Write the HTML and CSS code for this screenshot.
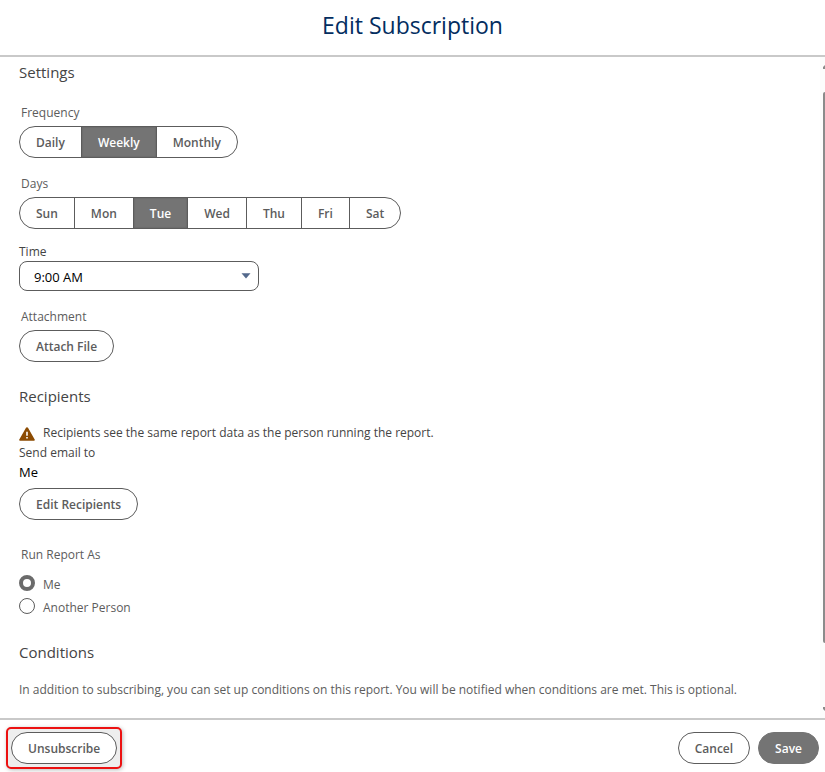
FILE: index.html
```html
<!DOCTYPE html>
<html lang="en">
<head>
<meta charset="utf-8">
<title>Edit Subscription</title>
<link rel="stylesheet" href="styles.css">
</head>
<body>
<div class="modal">
  <header class="modal-header"><h1>Edit Subscription</h1></header>
  <div class="modal-body">
    <main class="content">
      <section class="section">
        <h2>Settings</h2>
        <fieldset class="field frequency">
          <legend>Frequency</legend>
          <div class="segments">
            <label><input type="radio" name="frequency"><span>Daily</span></label>
            <label><input type="radio" name="frequency" checked><span>Weekly</span></label>
            <label><input type="radio" name="frequency"><span>Monthly</span></label>
          </div>
        </fieldset>
        <fieldset class="field days">
          <legend>Days</legend>
          <div class="segments">
            <label><input type="checkbox"><span>Sun</span></label>
            <label><input type="checkbox"><span>Mon</span></label>
            <label><input type="checkbox" checked><span>Tue</span></label>
            <label><input type="checkbox"><span>Wed</span></label>
            <label><input type="checkbox"><span>Thu</span></label>
            <label><input type="checkbox"><span>Fri</span></label>
            <label><input type="checkbox"><span>Sat</span></label>
          </div>
        </fieldset>
        <div class="field time">
          <label class="small-label" for="time">Time</label>
          <div class="select">
            <select id="time"><option>9:00 AM</option></select>
            <svg class="arrow" viewBox="0 0 10 6" aria-hidden="true"><path d="M0.5 0.3h9L5 5.5z"/></svg>
          </div>
        </div>
        <fieldset class="field attachment">
          <legend>Attachment</legend>
          <button type="button" class="button">Attach File</button>
        </fieldset>
      </section>
      <section class="section">
        <h2>Recipients</h2>
        <div class="recipients">
          <p class="notice">
            <svg viewBox="0 0 16 16" aria-hidden="true"><path class="sign" d="M8 1.2c.5 0 .8.2 1 .6l6.700 11.600c.4.7 0 1.400-.8 1.400H1.100c-.8 0-1.200-.7-.8-1.400L7 1.800c.2-.4.5-.6 1-.6z"/><path class="mark" d="M7.200 5.800h1.600v4H7.200zM7.200 11h1.600v1.600H7.200z"/></svg>
            <span>Recipients see the same report data as the person running the report.</span>
          </p>
          <p class="small-label">Send email to</p>
          <p class="recipient">Me</p>
          <button type="button" class="button">Edit Recipients</button>
        </div>
        <fieldset class="field run-as">
          <legend>Run Report As</legend>
          <label class="radio"><input type="radio" name="run-as" checked>Me</label>
          <label class="radio"><input type="radio" name="run-as">Another Person</label>
        </fieldset>
      </section>
      <section class="section">
        <h2>Conditions</h2>
        <p class="description">In addition to subscribing, you can set up conditions on this report. You will be notified when conditions are met. This is optional.</p>
      </section>
    </main>
    <div class="scrollbar" aria-hidden="true">
      <svg viewBox="0 0 2 4"><path d="M2 0v4H0V2z"/></svg>
      <div class="thumb"></div>
      <svg viewBox="0 0 2 4"><path d="M0 0h2v4L0 2z"/></svg>
    </div>
  </div>
  <footer class="modal-footer">
    <div class="highlight"><button type="button" class="button">Unsubscribe</button></div>
    <div class="actions">
      <button type="button" class="button">Cancel</button>
      <button type="button" class="button primary">Save</button>
    </div>
  </footer>
</div>
</body>
</html>
```

FILE: styles.css
```css
* { box-sizing: border-box; }

body {
  margin: 0;
  background: #fff;
  color: #5c5c5c;
  font: 12px/20px "Open Sans", "Noto Sans", sans-serif;
}

h1, h2, p { margin: 0; font-weight: 400; }

.modal { display: flex; flex-direction: column; height: 100vh; }

.modal-header {
  padding: 10px 16px 15px;
  border-bottom: 2px solid #c9c9c9;
  text-align: center;
}

h1 { color: #032d60; font-size: 23px; line-height: 30px; }

.modal-body { display: flex; flex: 1; min-height: 0; }

.content { flex: 1; min-width: 0; padding: 3px 19px 0; overflow: hidden; }

.section { margin-bottom: 22px; }

h2 { margin-bottom: 15px; color: #444; font-size: 15px; line-height: 24px; }

fieldset { min-width: 0; margin: 0; padding: 0; border: 0; }

legend { padding: 0 2px; line-height: 20px; }

.small-label { display: block; color: #444; line-height: 18px; }

.frequency { margin-top: 19px; }
.segments { margin-top: 3px; }
.days { margin-top: 16px; }
.time { margin-top: 14px; }
.attachment { margin-top: 16px; }
.attachment .button { margin-top: 3px; }

.segments { display: flex; width: fit-content; }

.segments label { position: relative; margin-left: -1px; }
.segments label:first-child { margin-left: 0; }

.segments input { position: absolute; opacity: 0; margin: 0; }

.segments span {
  display: block;
  padding: 2px 16px 0;
  border: 1px solid #5c5c5c;
  font-weight: 600;
  line-height: 28px;
}

.segments label:first-child span { border-radius: 16px 0 0 16px; }
.segments label:last-child span { border-radius: 0 16px 16px 0; }

.segments input:checked + span {
  background: #747474;
  box-shadow: inset 0 0 2px #5c5c5c;
  color: #fff;
}

.select { position: relative; width: 240px; }

select {
  display: block;
  width: 100%;
  height: 30px;
  padding: 2px 14px 0;
  appearance: none;
  border: 1px solid #5c5c5c;
  border-radius: 8px;
  background: #fff;
  color: #000;
  font: inherit;
  font-size: 13px;
}

.arrow { position: absolute; top: 12px; right: 8px; width: 10px; height: 6px; fill: #53698c; }

.button {
  display: block;
  height: 32px;
  padding: 2px 16px 0;
  border: 1px solid #5c5c5c;
  border-radius: 16px;
  background: #fff;
  color: #5c5c5c;
  font: inherit;
  font-weight: 600;
}

.primary { border-color: #747474; background: #747474; color: #fff; }

.notice { display: flex; gap: 8px; margin-bottom: 1px; color: #444; }
.notice svg { flex: none; width: 16px; height: 16px; margin-top: 3px; }
.sign { fill: #8c4b02; }
.mark { fill: #fff; }

.recipient { margin: 0 0 6px; color: #000; font-size: 13px; }

.run-as { margin-top: 25px; }

.radio { display: flex; gap: 8px; width: fit-content; margin-top: 3px; }
.run-as legend + .radio { margin-top: 10px; }

.radio input {
  width: 16px;
  height: 16px;
  margin: 0;
  appearance: none;
  border: 1px solid #5c5c5c;
  border-radius: 50%;
}

.radio input:checked { border: 4px solid #6b6b6b; }

.description { margin-top: 16px; }

.scrollbar {
  display: flex;
  flex-direction: column;
  align-items: flex-end;
  justify-content: space-between;
  width: 5px;
  padding: 8px 0 7px;
  background: #fcfcfc;
}

.scrollbar svg { width: 2px; height: 4px; fill: #8b8b8b; }

.thumb { flex: 1; width: 2px; margin: 23px 0 64px; border-radius: 2px 0 0 2px; background: #8b8b8b; }

.modal-footer {
  display: flex;
  justify-content: space-between;
  align-items: center;
  padding: 7px 6px 3px;
  border-top: 2px solid #c9c9c9;
}

.highlight {
  padding: 3px;
  border: 2px solid #ec1111;
  border-radius: 5px;
  background: #eee;
  box-shadow: 1px 1px 4px #bbb;
}

.actions { display: flex; gap: 8px; }
```
